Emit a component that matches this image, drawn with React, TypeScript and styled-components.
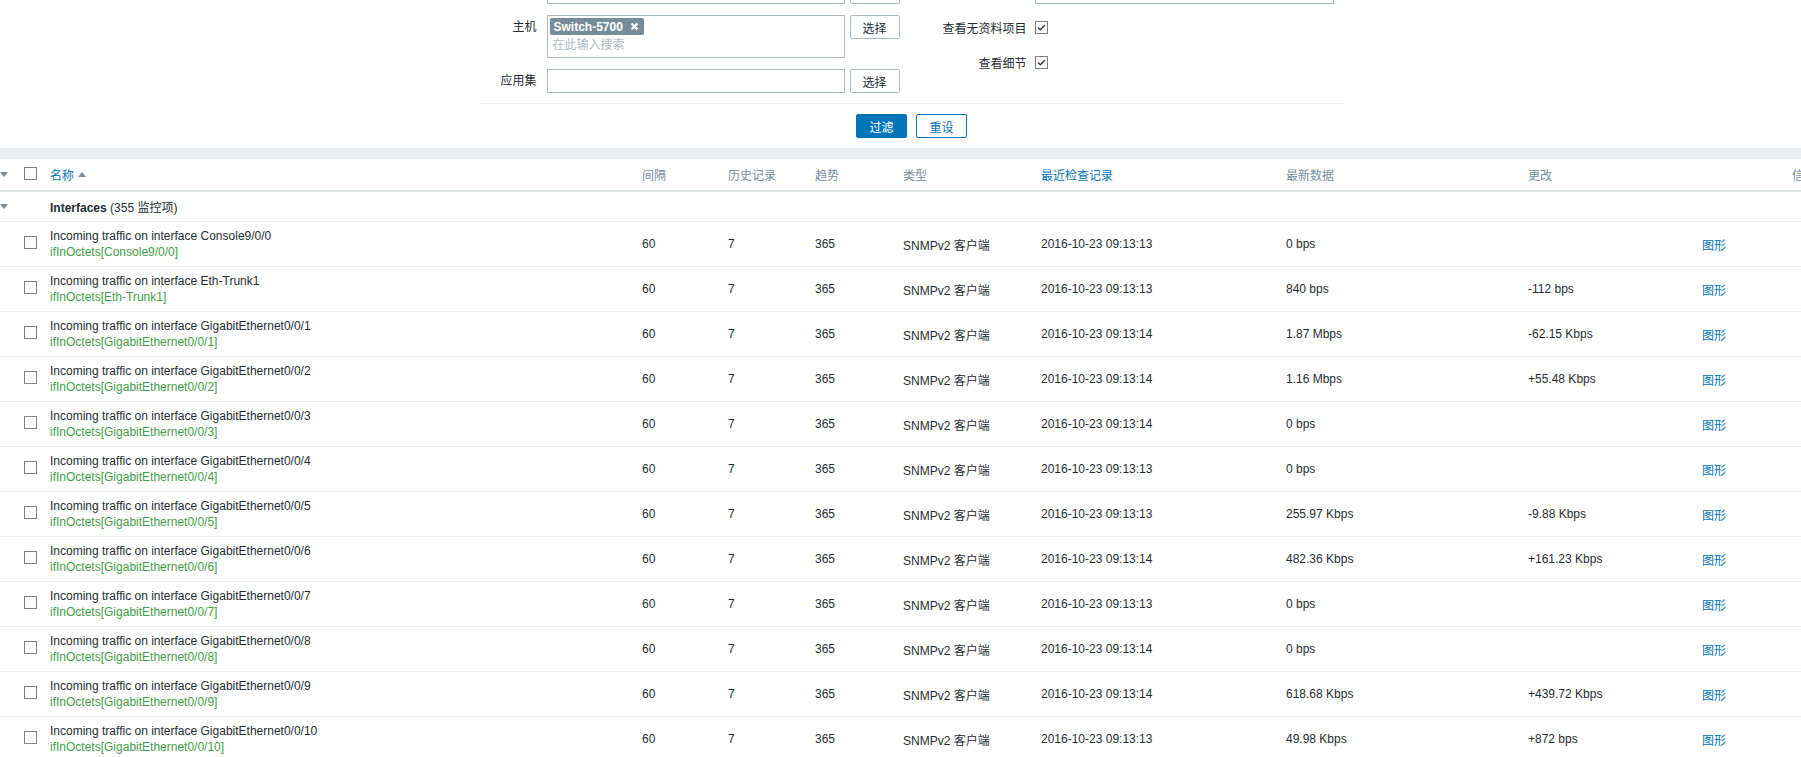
import React from "react";
import styled, { createGlobalStyle } from "styled-components";

const GlobalStyle = createGlobalStyle`
  html, body {
    margin: 0;
    padding: 0;
    background: #ffffff;
    overflow: hidden;
  }
  body {
    font-family: "Liberation Sans", Arial, "Noto Sans CJK SC", sans-serif;
    font-size: 12px;
    color: #1f2c33;
  }
`;

const COLS = "24px 26px 592px 86px 87px 88px 138px 245px 242px 174px 90px 108px";

const Page = styled.div`
  width: 1801px;
  height: 757px;
  overflow: hidden;
`;

/* ---------- filter ---------- */

const FilterArea = styled.div`
  display: flex;
  justify-content: center;
  padding-left: 22px;
  margin-top: -20px;
`;

const FilterForm = styled.div`
  width: 866px;
  display: flex;
  flex-direction: column;
`;

const FilterColumns = styled.div`
  display: grid;
  grid-template-columns: 433px 433px;
  padding-bottom: 10px;
  border-bottom: 1px solid #ebeef0;
`;

const FilterColumn = styled.div`
  display: flex;
  flex-direction: column;
  gap: 11px;
`;

const FieldRow = styled.div<{ $labelWidth: number; $gap?: number }>`
  display: grid;
  grid-template-columns: ${(p) => p.$labelWidth}px auto auto;
  column-gap: ${(p) => p.$gap ?? 10}px;
  align-items: start;
`;

const FieldLabel = styled.label`
  text-align: right;
  line-height: 24px;
  white-space: nowrap;
`;

const Controls = styled.div`
  display: flex;
  gap: 5px;
  align-items: flex-start;
`;

const TextBox = styled.div<{ $width: number; $tall?: boolean }>`
  box-sizing: border-box;
  width: ${(p) => p.$width}px;
  height: ${(p) => (p.$tall ? 43 : 24)}px;
  border: 1px solid #acbbc2;
  background: #ffffff;
  padding: 2px 2px;
  display: flex;
  flex-direction: column;
  align-items: flex-start;
`;

const Chip = styled.span`
  display: inline-flex;
  align-items: center;
  gap: 7px;
  height: 17px;
  padding: 0 5px 0 4px;
  border-radius: 2px;
  background: #768d99;
  color: #ffffff;
  font-weight: bold;
  font-size: 12px;
`;

const Placeholder = styled.span`
  color: #acbbc2;
  line-height: 20px;
  padding-left: 3px;
`;

const GreyButton = styled.button`
  box-sizing: border-box;
  width: 50px;
  height: 24px;
  border: 1px solid #acbbc2;
  border-radius: 2px;
  background: #ffffff;
  color: #1f2c33;
  font: inherit;
  padding: 0;
`;

const CheckRow = styled.div`
  display: grid;
  grid-template-columns: 115px auto;
  column-gap: 8px;
  align-items: center;
  height: 24px;
`;

const CheckLabel = styled.span`
  text-align: right;
  white-space: nowrap;
`;

const Box = styled.span`
  box-sizing: border-box;
  display: inline-flex;
  align-items: center;
  justify-content: center;
  width: 13px;
  height: 13px;
  border: 1px solid #808080;
  background: #ffffff;
`;

const ButtonBar = styled.div`
  display: flex;
  justify-content: center;
  gap: 9px;
  padding: 10px 0 10px;
`;

const ActionButton = styled.button<{ $primary?: boolean }>`
  box-sizing: border-box;
  width: 51px;
  height: 24px;
  border-radius: 2px;
  border: 1px solid #0275b8;
  background: ${(p) => (p.$primary ? "#0275b8" : "#ffffff")};
  color: ${(p) => (p.$primary ? "#ffffff" : "#0275b8")};
  font: inherit;
  padding: 0;
`;

const Band = styled.div`
  height: 11px;
  background: #ebeef0;
`;

/* ---------- table ---------- */

const Table = styled.div`
  width: 1910px;
`;

const Row = styled.div`
  display: grid;
  grid-template-columns: ${COLS};
  align-items: center;
`;

const HeaderRow = styled(Row)`
  height: 31px;
  border-bottom: 2px solid #dfe4e7;
  color: #768d99;
`;

const GroupRow = styled(Row)`
  height: 29px;
  border-bottom: 1px solid #ebeef0;
`;

const ItemRow = styled(Row)`
  height: 44px;
  border-bottom: 1px solid #ebeef0;
`;

const Cell = styled.div<{ $span?: number }>`
  white-space: nowrap;
  ${(p) => (p.$span ? `grid-column: span ${p.$span};` : "")}
`;

const Toggle = styled.div`
  display: flex;
  align-items: center;
`;

const HeadLink = styled.span`
  color: #0275b8;
  display: inline-flex;
  align-items: center;
  gap: 4px;
`;

const Link = styled.span`
  color: #0275b8;
`;

const GroupName = styled.span`
  font-weight: bold;
`;

const NameLines = styled.div`
  display: flex;
  flex-direction: column;
  line-height: 16px;
`;

const KeyText = styled.span`
  color: #429e47;
`;

const Arrow = () => (
  <svg width="8" height="5" viewBox="0 0 8 5">
    <path d="M0 0 L8 0 L4 5 Z" fill="#768d99" />
  </svg>
);

const SortUp = () => (
  <svg width="8" height="5" viewBox="0 0 8 5">
    <path d="M0 5 L8 5 L4 0 Z" fill="#768d99" />
  </svg>
);

const Tick = () => (
  <svg width="9" height="7" viewBox="0 0 9 7">
    <path d="M1 3.5 L3.3 5.8 L8 1" fill="none" stroke="#333" strokeWidth="1.3" />
  </svg>
);

const Cross = () => (
  <svg width="9" height="9" viewBox="0 0 9 9">
    <path d="M1.5 1.5 L7.5 7.5 M7.5 1.5 L1.5 7.5" stroke="#ffffff" strokeWidth="2.2" />
  </svg>
);

type Item = {
  port: string;
  time: string;
  value: string;
  change: string;
};

const items: Item[] = [
  { port: "Console9/0/0", time: "13", value: "0 bps", change: "" },
  { port: "Eth-Trunk1", time: "13", value: "840 bps", change: "-112 bps" },
  { port: "GigabitEthernet0/0/1", time: "14", value: "1.87 Mbps", change: "-62.15 Kbps" },
  { port: "GigabitEthernet0/0/2", time: "14", value: "1.16 Mbps", change: "+55.48 Kbps" },
  { port: "GigabitEthernet0/0/3", time: "14", value: "0 bps", change: "" },
  { port: "GigabitEthernet0/0/4", time: "13", value: "0 bps", change: "" },
  { port: "GigabitEthernet0/0/5", time: "13", value: "255.97 Kbps", change: "-9.88 Kbps" },
  { port: "GigabitEthernet0/0/6", time: "14", value: "482.36 Kbps", change: "+161.23 Kbps" },
  { port: "GigabitEthernet0/0/7", time: "13", value: "0 bps", change: "" },
  { port: "GigabitEthernet0/0/8", time: "14", value: "0 bps", change: "" },
  { port: "GigabitEthernet0/0/9", time: "14", value: "618.68 Kbps", change: "+439.72 Kbps" },
  { port: "GigabitEthernet0/0/10", time: "13", value: "49.98 Kbps", change: "+872 bps" },
];

export default function App() {
  return (
    <Page>
      <GlobalStyle />
      <FilterArea>
        <FilterForm>
          <FilterColumns>
            <FilterColumn>
              {/* row scrolled above the top edge: only the bottom of its fields shows */}
              <FieldRow $labelWidth={58}>
                <FieldLabel />
                <Controls>
                  <TextBox $width={298} />
                  <GreyButton aria-label="选择" />
                </Controls>
              </FieldRow>
              <FieldRow $labelWidth={58}>
                <FieldLabel>主机</FieldLabel>
                <Controls>
                  <TextBox $width={298} $tall>
                    <Chip>
                      Switch-5700
                      <Cross />
                    </Chip>
                    <Placeholder>在此输入搜索</Placeholder>
                  </TextBox>
                  <GreyButton>选择</GreyButton>
                </Controls>
              </FieldRow>
              <FieldRow $labelWidth={58}>
                <FieldLabel>应用集</FieldLabel>
                <Controls>
                  <TextBox $width={298} />
                  <GreyButton>选择</GreyButton>
                </Controls>
              </FieldRow>
            </FilterColumn>
            <FilterColumn>
              <FieldRow $labelWidth={115} $gap={8}>
                <FieldLabel />
                <TextBox $width={299} />
              </FieldRow>
              <CheckRow>
                <CheckLabel>查看无资料项目</CheckLabel>
                <Box>
                  <Tick />
                </Box>
              </CheckRow>
              <CheckRow>
                <CheckLabel>查看细节</CheckLabel>
                <Box>
                  <Tick />
                </Box>
              </CheckRow>
            </FilterColumn>
          </FilterColumns>
          <ButtonBar>
            <ActionButton $primary>过滤</ActionButton>
            <ActionButton>重设</ActionButton>
          </ButtonBar>
        </FilterForm>
      </FilterArea>
      <Band />
      <Table>
        <HeaderRow>
          <Toggle>
            <Arrow />
          </Toggle>
          <Cell>
            <Box />
          </Cell>
          <Cell>
            <HeadLink>
              名称
              <SortUp />
            </HeadLink>
          </Cell>
          <Cell>间隔</Cell>
          <Cell>历史记录</Cell>
          <Cell>趋势</Cell>
          <Cell>类型</Cell>
          <Cell>
            <Link>最近检查记录</Link>
          </Cell>
          <Cell>最新数据</Cell>
          <Cell>更改</Cell>
          <Cell />
          <Cell>信息</Cell>
        </HeaderRow>
        <GroupRow>
          <Toggle>
            <Arrow />
          </Toggle>
          <Cell />
          <Cell $span={10}>
            <GroupName>Interfaces</GroupName> (355 监控项)
          </Cell>
        </GroupRow>
        {items.map((it) => (
          <ItemRow key={it.port}>
            <Cell />
            <Cell>
              <Box />
            </Cell>
            <Cell>
              <NameLines>
                <span>Incoming traffic on interface {it.port}</span>
                <KeyText>ifInOctets[{it.port}]</KeyText>
              </NameLines>
            </Cell>
            <Cell>60</Cell>
            <Cell>7</Cell>
            <Cell>365</Cell>
            <Cell>SNMPv2 客户端</Cell>
            <Cell>2016-10-23 09:13:{it.time}</Cell>
            <Cell>{it.value}</Cell>
            <Cell>{it.change}</Cell>
            <Cell>
              <Link>图形</Link>
            </Cell>
            <Cell />
          </ItemRow>
        ))}
      </Table>
    </Page>
  );
}
